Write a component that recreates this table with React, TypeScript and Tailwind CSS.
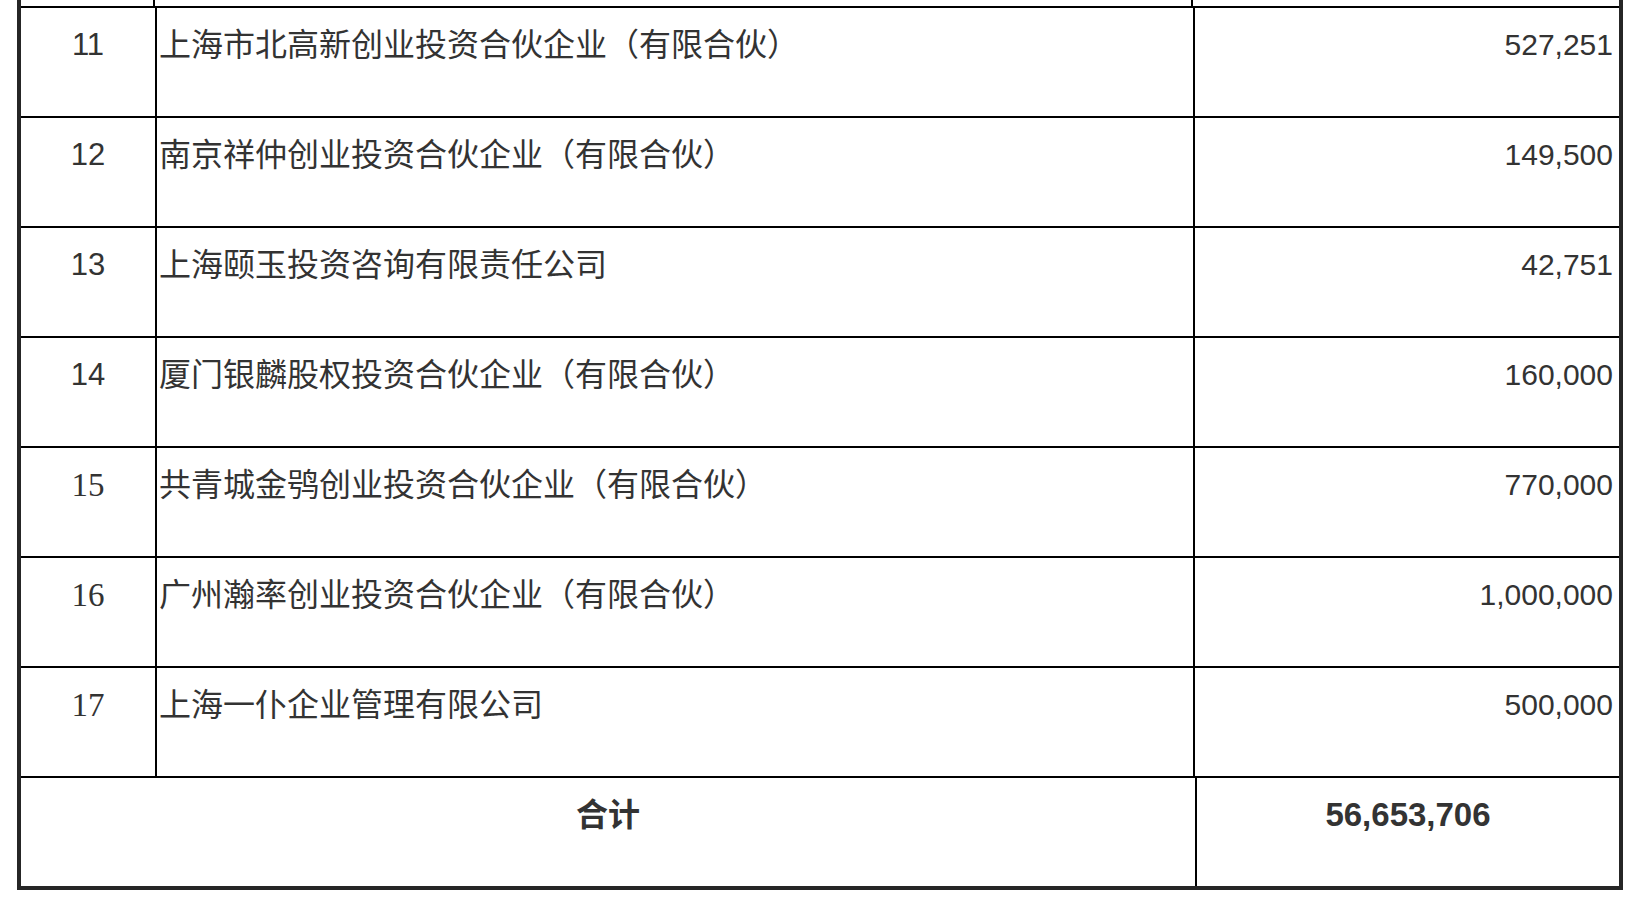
const rows = [
  { no: "11", name: "上海市北高新创业投资合伙企业（有限合伙）", amount: "527,251", serifNo: false },
  { no: "12", name: "南京祥仲创业投资合伙企业（有限合伙）", amount: "149,500", serifNo: false },
  { no: "13", name: "上海颐玉投资咨询有限责任公司", amount: "42,751", serifNo: false },
  { no: "14", name: "厦门银麟股权投资合伙企业（有限合伙）", amount: "160,000", serifNo: false },
  { no: "15", name: "共青城金鸮创业投资合伙企业（有限合伙）", amount: "770,000", serifNo: true },
  { no: "16", name: "广州瀚率创业投资合伙企业（有限合伙）", amount: "1,000,000", serifNo: true },
  { no: "17", name: "上海一仆企业管理有限公司", amount: "500,000", serifNo: true },
];

const sans = "font-['Liberation_Sans','Noto_Sans_CJK_SC',sans-serif]";
const serif = "font-['Liberation_Serif','Noto_Sans_CJK_SC',serif]";
const cjk = "font-['Liberation_Serif','Noto_Sans_CJK_SC',sans-serif]";

export default function App() {
  return (
    <div className="min-h-screen w-full bg-white text-[#333]">
      <div className="ml-[17px] w-[1606px] border-x-4 border-b-4 border-[#262626]">
        {/* tail of the previous row */}
        <div className="flex h-[6px]">
          <div className="w-[134px] border-r-2 border-black" />
          <div className="w-[1038px] border-r-2 border-black" />
          <div className="flex-1" />
        </div>

        {rows.map((r) => (
          <div key={r.no} className="flex h-[110px] border-t-2 border-black">
            <div
              className={`w-[134px] pt-[14px] text-center leading-[46px] ${
                r.serifNo ? serif + " text-[33px]" : sans + " text-[31px]"
              }`}
            >
              {r.no}
            </div>
            <div className={`w-[1038px] border-l-2 border-black pl-[2px] pt-[14px] text-[32px] leading-[46px] ${cjk}`}>
              {r.name}
            </div>
            <div className={`flex-1 border-l-2 border-black pr-[6px] pt-[14px] text-right text-[30px] leading-[46px] ${sans}`}>
              {r.amount}
            </div>
          </div>
        ))}

        <div className="flex h-[110px] border-t-2 border-black">
          <div className={`w-[1174px] pt-[14px] text-center text-[32px] font-semibold leading-[46px] ${cjk}`}>
            合计
          </div>
          <div className={`flex-1 border-l-2 border-black pt-[14px] text-center text-[33px] font-bold leading-[46px] ${sans}`}>
            56,653,706
          </div>
        </div>
      </div>
    </div>
  );
}
